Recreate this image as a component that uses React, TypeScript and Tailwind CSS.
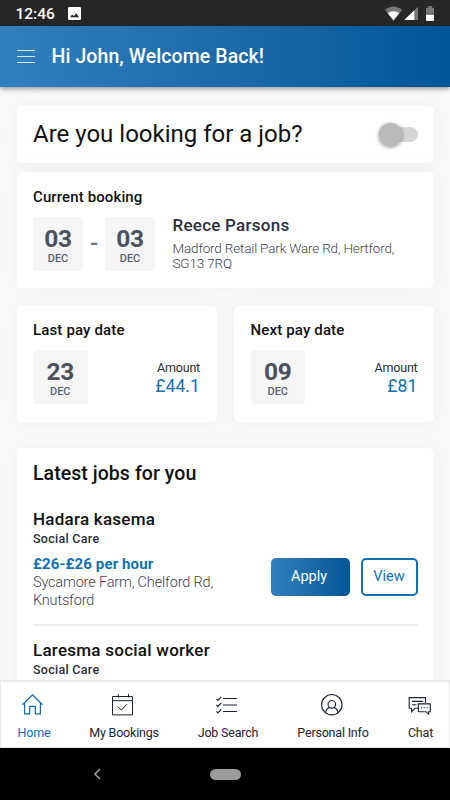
import React from 'react';
import clsx from 'clsx';

interface DateBoxProps {
  day: string;
  month: string;
  className?: string;
}

const DateBox: React.FC<DateBoxProps> = ({ day, month, className }) => (
  <div className={clsx('flex h-[54px] flex-col items-center rounded bg-[#f5f5f5] pt-[8px]', className)}>
    <span className="text-[24.5px] font-bold leading-[28px] tracking-[-0.4px] text-[#4b525c]">{day}</span>
    <span className="text-[11px] font-medium leading-[12px] text-[#5b616b]">{month}</span>
  </div>
);

const cardStyle = 'rounded-[5px] bg-white shadow-[0_0_22px_rgba(0,0,0,0.05)]';

const PayCard: React.FC<{ title: string; day: string; amount: string }> = ({ title, day, amount }) => (
  <section className={clsx(cardStyle, 'h-[116px] w-[200px] px-[16.5px] pt-[14px]')}>
    <h2 className="whitespace-nowrap text-[15px] font-medium leading-[20px] tracking-[0.15px] text-[#111]">{title}</h2>
    <div className="mt-[10.5px] flex items-start justify-between">
      <DateBox day={day} month="DEC" className="w-[54.5px]" />
      <div className="pt-[9px] text-right">
        <p className="text-[12.5px] leading-[17px] tracking-[-0.2px] text-[#2a2e39]">Amount</p>
        <p className="text-[17.5px] leading-[21px] tracking-[0.1px] text-[#0f70b7]">{amount}</p>
      </div>
    </div>
  </section>
);

const JobHeading: React.FC<{ title: string; category: string }> = ({ title, category }) => (
  <>
    <h3 className="whitespace-nowrap text-[17px] font-medium leading-[22px] tracking-[0.25px] text-[#111]">{title}</h3>
    <p className="text-[12.5px] font-medium leading-[17px] tracking-[0.28px] text-[#2a3040]">{category}</p>
  </>
);

const HomeIcon = () => (
  <svg width="22" height="22" viewBox="0 0 22 22" fill="none" stroke="currentColor" strokeWidth="1.2">
    <path d="M.4 10.8 10.5.8l10.1 10M2.6 8.8v11.1h5.1v-7.6h5.6v7.6h5.1V8.8" />
  </svg>
);

const CalendarIcon = () => (
  <svg width="22" height="22" viewBox="0 0 22 22" fill="none" stroke="currentColor" strokeWidth="1">
    <path d="M.5 2.5h20v18.4H.5zM.5 6.7h20M6.3 0v3.6M16.5 0v3.6" />
    <path d="m5.9 12.8 3.4 3.2 5.8-5.8" />
  </svg>
);

const ListIcon = () => (
  <svg width="22" height="22" viewBox="0 0 22 22" fill="none" stroke="currentColor" strokeWidth="1.2">
    <path d="M7 4.5h14M7 11h14M7 17.5h14" />
    <path d="m.4 4.9 1.5 1.5 3.4-3.5M.4 11l1.5 1.5L5.3 9M.4 17.4l1.5 1.5 3.4-3.5" />
  </svg>
);

const PersonIcon = () => (
  <svg width="22" height="22" viewBox="0 0 22 22" fill="none" stroke="currentColor" strokeWidth="1.1">
    <circle cx="10.8" cy="10.7" r="10.2" />
    <circle cx="10.8" cy="10.3" r="3.8" />
    <path d="M4.6 18.8c.4-3.1 1.9-4.7 4-5.2M17 18.8c-.4-3.1-1.9-4.7-4-5.2" />
  </svg>
);

const ChatIcon = () => (
  <svg width="24" height="22" viewBox="0 0 24 22" fill="none" stroke="currentColor" strokeWidth="1.1">
    <path d="M17.5 9V3.6H1.2v10.6h2.5v3.7l3.4-3.7h2.9M4 7.4h10.8M4 10.8h4.6" />
    <path d="M10.4 9.9h11.9v7.8h-1.7v2.4l-2.6-2.4h-7.6z" />
    <path d="M12.9 13.8h1.2M15.7 13.8h1.2M18.5 13.8h1.2" />
  </svg>
);

const tabs = [
  { label: 'Home', icon: <HomeIcon />, width: 'w-[66px]' },
  { label: 'My Bookings', icon: <CalendarIcon />, width: 'w-[114px]' },
  { label: 'Job Search', icon: <ListIcon />, width: 'w-[94px]' },
  { label: 'Personal Info', icon: <PersonIcon />, width: 'w-[116px]' },
  { label: 'Chat', icon: <ChatIcon />, width: 'w-[59px]' },
];

const StatusBar = () => (
  <div className="flex h-[26px] shrink-0 items-center bg-[#262626] pl-[15.5px] pr-[16px] pt-[1px] text-white">
    <span className="text-[15.5px] font-medium leading-[20px]">12:46</span>
    <svg className="ml-[13px]" width="13" height="13" viewBox="0 0 13 13">
      <rect width="13" height="13" rx="1.3" fill="#fff" />
      <path d="M2 10.3 4.2 7.4l1.6 1.9 2.3-3 3 4z" fill="#262626" />
    </svg>
    <div className="ml-auto flex items-center">
      <svg width="17" height="15" viewBox="0 0 17 15">
        <path d="M8.5 14.5 0 4C4.8-.7 12.2-.7 17 4z" fill="#777" />
        <path d="M8.5 14.5 2.7 7.3c3.3-2.9 8.3-2.9 11.6 0z" fill="#fff" />
      </svg>
      <svg className="ml-[2px]" width="14" height="15" viewBox="0 0 14 15">
        <path d="M14 .8V14H.3z" fill="#777" />
        <path d="M10.3 4.3V14H.3z" fill="#fff" />
      </svg>
      <svg className="ml-[8px]" width="8" height="15" viewBox="0 0 8 15">
        <path d="M0 1.8h2.2V0h3.6v1.8H8V9H0z" fill="#777" />
        <path d="M0 9h8v5.2a.8.8 0 0 1-.8.8H.8a.8.8 0 0 1-.8-.8z" fill="#fff" />
      </svg>
    </div>
  </div>
);

const App: React.FC = () => {
  return (
    <div className="flex h-[800px] w-[450px] flex-col overflow-hidden bg-[#fafafa] font-['Roboto',sans-serif]">
      <StatusBar />

      <header className="z-10 flex h-[61px] shrink-0 items-center bg-gradient-to-r from-[#307fbe] to-[#015696] pl-[17px] shadow-[0_2px_5px_rgba(0,0,0,0.4)]">
        <div className="flex h-[13px] w-[18px] flex-col justify-between">
          <span className="h-px bg-[#d5e4f0]" />
          <span className="h-px bg-[#d5e4f0]" />
          <span className="h-px bg-[#d5e4f0]" />
        </div>
        <h1 className="ml-[16.5px] whitespace-nowrap text-[19.5px] font-medium leading-[24px] tracking-[0.09px] text-white">Hi John, Welcome Back!</h1>
      </header>

      <main className="min-h-0 flex-1 overflow-hidden pl-[16.5px] pr-[16px] pt-[19px]">
        <section className={clsx(cardStyle, 'flex h-[57px] items-center justify-between pl-[16.5px] pr-[16px]')}>
          <h2 className="whitespace-nowrap pb-[1px] text-[24px] leading-[30px] text-[#111]">Are you looking for a job?</h2>
          <div className="flex h-[15px] w-[38px] items-center rounded-full bg-[#d5d5d5]">
            <span className="ml-[-1.5px] h-[23px] w-[23px] shrink-0 rounded-full bg-[#b9b9b9] shadow-[0_1px_4px_rgba(0,0,0,0.45)]" />
          </div>
        </section>

        <section className={clsx(cardStyle, 'mt-[9px] h-[116px] px-[16.5px] pt-[15px]')}>
          <h2 className="text-[15px] font-medium leading-[20px] tracking-[0.12px] text-[#111]">Current booking</h2>
          <div className="mt-[10px] flex">
            <DateBox day="03" month="DEC" className="w-[50px]" />
            <span className="w-[22px] text-center text-[24px] font-medium leading-[52px] text-[#6b7280]">-</span>
            <DateBox day="03" month="DEC" className="w-[50px]" />
            <div className="ml-[17.5px]">
              <p className="text-[17px] font-medium leading-[17px] tracking-[0.25px] text-[#2a3040]">Reece Parsons</p>
              <p className="mt-[6.5px] whitespace-nowrap text-[13.5px] font-light leading-[15px] tracking-[-0.17px] text-[#3d424d]">
                Madford Retail Park Ware Rd, Hertford,
                <br />
                SG13 7RQ
              </p>
            </div>
          </div>
        </section>

        <div className="mt-[17.5px] flex justify-between">
          <PayCard title="Last pay date" day="23" amount="£44.1" />
          <PayCard title="Next pay date" day="09" amount="£81" />
        </div>

        <section className={clsx(cardStyle, 'mt-[26px] h-[400px] px-[16.5px] pt-[14px]')}>
          <h2 className="text-[19.5px] font-medium leading-[24px] tracking-[0.06px] text-[#111]">Latest jobs for you</h2>
          <div className="mt-[22px] h-[118px] border-b-2 border-[#ededed]">
            <JobHeading title="Hadara kasema" category="Social Care" />
            <div className="mt-[8px] flex justify-between">
              <div>
                <p className="text-[15px] font-bold leading-[18px] tracking-[0.12px] text-[#0f70b7]">£26-£26 per hour</p>
                <p className="mt-[1px] whitespace-nowrap text-[14.5px] font-light leading-[18px] tracking-[-0.17px] text-[#3d424d]">
                  Sycamore Farm, Chelford Rd,
                  <br />
                  Knutsford
                </p>
              </div>
              <div className="mt-[3.5px] flex gap-[11px]">
                <button className="h-[38px] w-[79px] rounded-[5px] bg-gradient-to-r from-[#307fbe] to-[#015696] pr-[2px] text-[14.5px] text-white">
                  Apply
                </button>
                <button className="h-[38px] w-[57px] rounded-[5px] border-2 border-[#0f70b7] text-[14.5px] text-[#0f70b7]">
                  View
                </button>
              </div>
            </div>
          </div>
          <div className="pt-[13.5px]">
            <JobHeading title="Laresma social worker" category="Social Care" />
          </div>
        </section>
      </main>

      <nav className="z-10 flex h-[68px] shrink-0 border border-t-2 border-[#e8e8e8] bg-white">
        {tabs.map((tab, index) => (
          <a key={tab.label} className={clsx('flex shrink-0 flex-col items-center pt-[12px]', tab.width, index === 0 ? 'text-[#0f70b7]' : 'text-[#1c2333]')}>
            <span className="mr-[2px] block">{tab.icon}</span>
            <span className="mt-[9px] whitespace-nowrap text-[12.5px] leading-[16px] tracking-[-0.2px]">{tab.label}</span>
          </a>
        ))}
      </nav>

      <div className="relative flex h-[52px] shrink-0 items-center justify-center bg-black">
        <svg className="absolute left-[93px] top-[20px]" width="8" height="12" viewBox="0 0 8 12" fill="none" stroke="#999" strokeWidth="1.7">
          <path d="M7 1 2 6l5 5" />
        </svg>
        <span className="h-[11px] w-[31px] rounded-full bg-[#9b9b9b]" />
      </div>
    </div>
  );
};

export default App;
